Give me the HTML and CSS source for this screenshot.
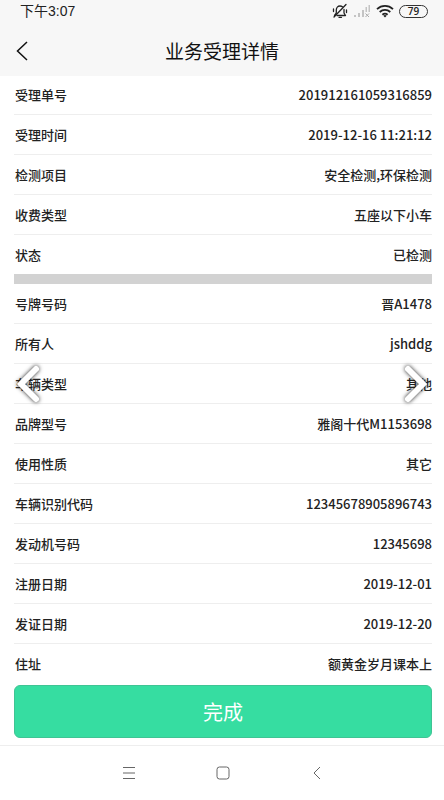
FILE: index.html
```html
<!DOCTYPE html>
<html lang="zh-CN">
<head>
  <meta charset="UTF-8" />
  <meta name="viewport" content="width=device-width, initial-scale=1.0"/>
  <title>业务受理详情</title>
  <link rel="stylesheet" href="styles.css">
</head>
<body>
  <header class="header">
    <!-- 状态栏 -->
    <div class="status-bar">
      <span class="time">下午3:07</span>
      <div class="status-icons">
        <svg class="icon-bell" width="16" height="16" viewBox="0 0 16 16" fill="none" stroke="#222" stroke-width="1.3" stroke-linecap="round" stroke-linejoin="round">
          <path d="M4.300 9.500V7c0-2.400 1.500-4 3.700-4 1 0 1.800.3 2.400.8M12 6.500V10l1.500 2.500H5"/>
          <path d="M2.500 12.500 4 10.500M7 14.300h2.500M14 1.500 2 14M1.500 6v2.500M14.500 7v2.500"/>
        </svg>
        <svg class="icon-signal" width="18" height="14" viewBox="0 0 18 14">
          <path d="M1 11h2v2H1zM5 9h2v4H5zM9 6h2v7H9zM12.500 3H14v5h-1.500zM15.500 1H17v7h-1.500z" fill="#c4c4c4"/>
          <path d="m12.500 9.500 3.500 3.500M16 9.500 12.500 13" stroke="#aaa" stroke-width="1"/>
        </svg>
        <svg class="icon-wifi" width="18" height="14" viewBox="0 0 18 14" fill="none" stroke="#222" stroke-width="1.800">
          <path d="M1 5.200c4.600-4.300 11.400-4.300 16 0M3.700 8c3.100-2.800 7.500-2.800 10.600 0M6.400 10.700c1.500-1.300 3.700-1.300 5.200 0"/>
          <path d="m7.300 11.700 1.700 1.800 1.700-1.800c-1-.8-2.400-.8-3.400 0z" fill="#222" stroke="none"/>
        </svg>
        <span class="battery">79</span>
      </div>
    </div>

    <!-- 标题栏 -->
    <div class="title-bar">
      <button class="back-button" aria-label="返回">
        <svg width="12" height="20" viewBox="0 0 12 20" fill="none" stroke="#111" stroke-width="1.500">
          <path d="M11 1 1.500 10 11 19"/>
        </svg>
      </button>
      <h1 class="title">业务受理详情</h1>
    </div>
  </header>

  <main class="content">
    <dl class="details">
      <div class="row"><dt>受理单号</dt><dd>201912161059316859</dd></div>
      <div class="row"><dt>受理时间</dt><dd>2019-12-16 11:21:12</dd></div>
      <div class="row"><dt>检测项目</dt><dd>安全检测,环保检测</dd></div>
      <div class="row"><dt>收费类型</dt><dd>五座以下小车</dd></div>
      <div class="row"><dt>状态</dt><dd>已检测</dd></div>
    </dl>
    <dl class="details vehicle">
      <div class="row"><dt>号牌号码</dt><dd>晋A1478</dd></div>
      <div class="row"><dt>所有人</dt><dd>jshddg</dd></div>
      <div class="row"><dt>车辆类型</dt><dd>其他</dd></div>
      <div class="row"><dt>品牌型号</dt><dd>雅阁十代M1153698</dd></div>
      <div class="row"><dt>使用性质</dt><dd>其它</dd></div>
      <div class="row"><dt>车辆识别代码</dt><dd>12345678905896743</dd></div>
      <div class="row"><dt>发动机号码</dt><dd>12345698</dd></div>
      <div class="row"><dt>注册日期</dt><dd>2019-12-01</dd></div>
      <div class="row"><dt>发证日期</dt><dd>2019-12-20</dd></div>
      <div class="row"><dt>住址</dt><dd>额黄金岁月课本上</dd></div>
    </dl>
    <button class="done-button">完成</button>
  </main>

  <!-- 系统导航 -->
  <nav class="nav-bar">
    <button class="nav-button" aria-label="菜单">
      <svg width="14" height="14" viewBox="0 0 14 14" stroke="#666" stroke-width="1">
        <path d="M1 1.500h12M1 7h12M1 12.500h12"/>
      </svg>
    </button>
    <button class="nav-button" aria-label="主页">
      <svg width="14" height="14" viewBox="0 0 14 14" fill="none" stroke="#666" stroke-width="1">
        <rect x="1" y="1" width="12" height="12" rx="2.500"/>
      </svg>
    </button>
    <button class="nav-button" aria-label="后退">
      <svg width="14" height="14" viewBox="0 0 14 14" fill="none" stroke="#666" stroke-width="1">
        <path d="M10 1 4 7l6 6"/>
      </svg>
    </button>
  </nav>

  <!-- 左右切换 -->
  <button class="slide-button prev" aria-label="上一张">
    <svg width="32" height="44" viewBox="0 0 32 44" fill="none" stroke="#fff" stroke-width="6" stroke-linecap="round">
      <path d="M24 7 9 22l15 15"/>
    </svg>
  </button>
  <button class="slide-button next" aria-label="下一张">
    <svg width="32" height="44" viewBox="0 0 32 44" fill="none" stroke="#fff" stroke-width="6" stroke-linecap="round">
      <path d="m8 7 15 15L8 37"/>
    </svg>
  </button>
</body>
</html>
```

FILE: styles.css
```css
* {
  box-sizing: border-box;
}
body {
  margin: 0;
  min-height: 100vh;
  display: flex;
  flex-direction: column;
  position: relative;
  background: #fff;
  color: #222;
  font-family: "Noto Sans CJK SC", sans-serif;
}
button {
  padding: 0;
  border: none;
  background: none;
  font-family: inherit;
  cursor: pointer;
}
svg {
  display: block;
}
.header {
  background: #f7f7f7;
}
.status-bar {
  display: flex;
  justify-content: space-between;
  align-items: center;
  height: 22px;
  padding: 0 16px 0 20px;
}
.time {
  font-family: "Liberation Sans", "Noto Sans CJK SC", sans-serif;
  font-size: 14px;
  line-height: 22px;
}
.status-icons {
  display: flex;
  align-items: center;
  gap: 5px;
}
.battery {
  width: 29px;
  height: 13px;
  border: 1px solid #333;
  border-radius: 7px;
  font-family: "Open Sans", sans-serif;
  font-size: 10px;
  font-weight: 600;
  line-height: 11px;
  text-align: center;
}
.title-bar {
  display: grid;
  grid-template-columns: 44px 1fr 44px;
  align-items: center;
  height: 54px;
  padding-top: 4px;
}
.back-button {
  display: flex;
  align-items: center;
  height: 44px;
  padding-left: 16px;
}
.title {
  margin: 0;
  color: #111;
  font-size: 19px;
  font-weight: normal;
  line-height: 28px;
  text-align: center;
}
.content {
  flex: 1;
  padding: 0 12px 7px 14px;
}
.details {
  margin: 0;
}
.vehicle {
  border-top: 10px solid #d2d2d2;
}
.row {
  display: flex;
  justify-content: space-between;
  align-items: center;
  height: 40px;
  padding-left: 1px;
  border-bottom: 1px solid #eee;
  font-size: 13px;
  font-weight: 500;
  line-height: 20px;
}
.details:first-child .row:first-child {
  height: 39px;
}
.row:last-child {
  height: 39px;
  border-bottom: none;
}
.row dd {
  margin: 0;
}
.done-button {
  display: block;
  width: 100%;
  height: 53px;
  margin-top: 2px;
  border: 1px solid #3fc494;
  border-radius: 6px;
  background: #36dda1;
  color: #fff;
  font-size: 20px;
}
.nav-bar {
  display: flex;
  justify-content: center;
  gap: 50px;
  padding: 5px 0 6px 2px;
  border-top: 1px solid #eee;
}
.nav-button {
  display: flex;
  justify-content: center;
  align-items: center;
  width: 44px;
  height: 44px;
}
/* 悬浮在列表上方 */
.slide-button {
  position: absolute;
  top: 362px;
}
.slide-button svg {
  filter: drop-shadow(0 0 2px #222);
}
.prev {
  left: 12px;
}
.next {
  right: 12px;
}
```
